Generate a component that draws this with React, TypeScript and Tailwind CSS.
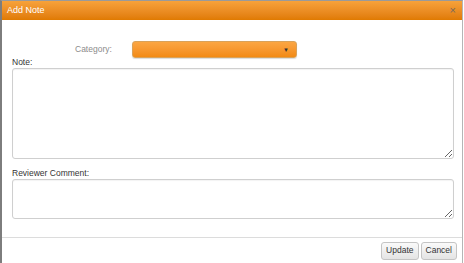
import React from "react";

export default function App() {
  return (
    <div className="w-[464px] h-[263px] bg-white font-['Liberation_Sans',Arial,sans-serif] overflow-hidden">
      <div className="w-[463px] h-[263px] flex flex-col border-l-2 border-l-[#7d7d7d] border-t border-t-[#9a9a9a] border-r border-r-[#b5b5b5]">
        <div className="h-[19px] flex items-center justify-between pl-[5px] pr-[6px] bg-gradient-to-b from-[#f7a23a] to-[#e07a00]">
          <span className="text-[9px] text-white">Add Note</span>
          <span className="text-[11px] leading-none text-[#7a6a5a]">×</span>
        </div>
        <div className="flex-1 flex flex-col">
          <div className="flex items-center h-[17px] mt-[21px] pl-[73px]">
            <span className="w-[57px] text-[8.5px] text-[#8c8c8c]">Category:</span>
            <div className="w-[165px] h-[17px] flex items-center justify-end pr-[7px] rounded-[3px] border border-[#d9a25a] bg-gradient-to-b from-[#fba643] to-[#f28a12] shadow-[0_1px_1px_rgba(0,0,0,0.15)]">
              <span className="text-[6px] leading-none text-[#333]">▼</span>
            </div>
          </div>
          <div className="px-[10px]">
            <div className="text-[8.5px] text-[#333] leading-[9px] mb-[1px]">Note:</div>
            <textarea className="block w-[442px] h-[91px] resize-y rounded-[3px] border border-[#cfcfcf] shadow-[inset_0_1px_1px_rgba(0,0,0,0.05)]" />
            <div className="text-[8.5px] text-[#333] leading-[9px] mt-[10px] mb-[1px]">Reviewer Comment:</div>
            <textarea className="block w-[442px] h-[40px] resize-y rounded-[3px] border border-[#cfcfcf] shadow-[inset_0_1px_1px_rgba(0,0,0,0.05)]" />
          </div>
          <div className="mt-auto h-[26px] border-t border-[#dcdcdc] flex items-center justify-end gap-[2px] pr-[5px]">
            <button className="h-[18px] px-[4px] text-[8.5px] text-[#333] rounded-[3px] border border-[#c4c4c4] bg-gradient-to-b from-[#fafafa] to-[#e4e4e4]">
              Update
            </button>
            <button className="h-[18px] px-[4px] text-[8.5px] text-[#333] rounded-[3px] border border-[#c4c4c4] bg-gradient-to-b from-[#fafafa] to-[#e4e4e4]">
              Cancel
            </button>
          </div>
        </div>
      </div>
    </div>
  );
}
